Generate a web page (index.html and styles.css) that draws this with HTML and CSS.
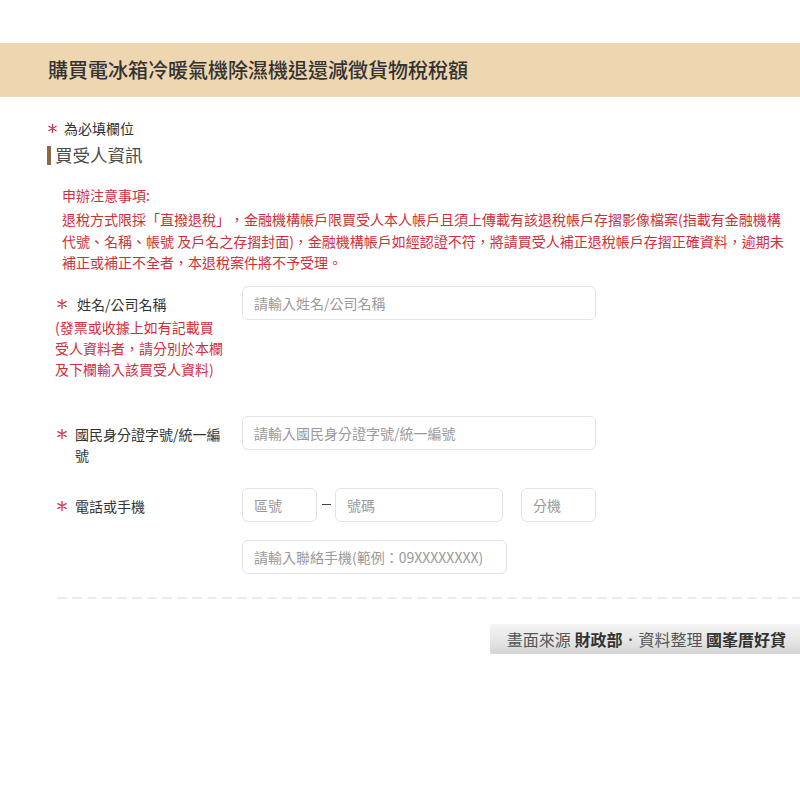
FILE: index.html
```html
<!DOCTYPE html>
<html lang="zh-Hant">
<head>
<meta charset="utf-8">
<title>購買電冰箱冷暖氣機除濕機退還減徵貨物稅稅額</title>
<link rel="stylesheet" href="styles.css">
</head>
<body>
<header class="topbar">
  <h1 class="topbar-title">購買電冰箱冷暖氣機除濕機退還減徵貨物稅稅額</h1>
</header>

<main class="content">
  <p class="required">
    <span class="star star-small"><svg viewBox="0 0 10 10" width="9" height="9"><path d="M5 0.3V9.7M0.9 2.6L9.1 7.4M0.9 7.4L9.1 2.6" stroke="#d2344c" stroke-width="1.3" fill="none" stroke-linecap="round"/></svg></span>
    <span>為必填欄位</span>
  </p>

  <h2 class="section-title">買受人資訊</h2>

  <div class="notice">
    <p class="notice-title">申辦注意事項:</p>
    <p class="notice-text">退稅方式限採「直撥退稅」，金融機構帳戶限買受人本人帳戶且須上傳載有該退稅帳戶存摺影像檔案(指載有金融機構<br>代號、名稱、帳號 及戶名之存摺封面)，金融機構帳戶如經認證不符，將請買受人補正退稅帳戶存摺正確資料，逾期未<br>補正或補正不全者，本退稅案件將不予受理。</p>
  </div>

  <form class="form">
    <div class="row row-name">
      <div class="label">
        <div class="label-main label-main-wide">
          <span class="star"><svg viewBox="0 0 10 10" width="10" height="10"><path d="M5 0.3V9.7M0.9 2.6L9.1 7.4M0.9 7.4L9.1 2.6" stroke="#d2344c" stroke-width="1.3" fill="none" stroke-linecap="round"/></svg></span>
          <span class="label-text">姓名/公司名稱</span>
        </div>
        <p class="label-note">(發票或收據上如有記載買受人資料者，請分別於本欄及下欄輸入該買受人資料)</p>
      </div>
      <div class="field">
        <input class="input" type="text" placeholder="請輸入姓名/公司名稱">
      </div>
    </div>

    <div class="row row-id">
      <div class="label">
        <div class="label-main">
          <span class="star"><svg viewBox="0 0 10 10" width="10" height="10"><path d="M5 0.3V9.7M0.9 2.6L9.1 7.4M0.9 7.4L9.1 2.6" stroke="#d2344c" stroke-width="1.3" fill="none" stroke-linecap="round"/></svg></span>
          <span class="label-text">國民身分證字號/統一編號</span>
        </div>
      </div>
      <div class="field">
        <input class="input" type="text" placeholder="請輸入國民身分證字號/統一編號">
      </div>
    </div>

    <div class="row row-phone">
      <div class="label">
        <div class="label-main">
          <span class="star"><svg viewBox="0 0 10 10" width="10" height="10"><path d="M5 0.3V9.7M0.9 2.6L9.1 7.4M0.9 7.4L9.1 2.6" stroke="#d2344c" stroke-width="1.3" fill="none" stroke-linecap="round"/></svg></span>
          <span class="label-text">電話或手機</span>
        </div>
      </div>
      <div class="field">
        <div class="phone-line">
          <input class="input input-area" type="text" placeholder="區號">
          <span class="phone-dash"></span>
          <input class="input input-number" type="text" placeholder="號碼">
          <input class="input input-ext" type="text" placeholder="分機">
        </div>
        <input class="input input-mobile" type="text" placeholder="請輸入聯絡手機(範例：09XXXXXXXX)">
      </div>
    </div>
  </form>

  <div class="divider"></div>
</main>

<footer class="credit">
  <div class="credit-badge">畫面來源&nbsp;<b>財政部</b>．資料整理&nbsp;<b>國峯厝好貸</b></div>
</footer>
</body>
</html>
```

FILE: styles.css
```css
body {
  margin: 0;
  background: #ffffff;
  color: #333333;
  font-family: "Noto Sans CJK TC", "Noto Sans", "Liberation Sans", sans-serif;
  text-spacing-trim: space-all;
}

.topbar {
  margin-top: 43px;
  height: 54px;
  background: #eed6b1;
  display: flex;
  align-items: center;
  padding-left: 48px;
}

.topbar-title {
  margin: 0;
  font-size: 20px;
  font-weight: 500;
  color: #333333;
  line-height: 1;
}

.content {
  padding-left: 48px;
}

.required {
  margin: 21px 0 0;
  font-size: 14px;
  line-height: 20px;
  display: flex;
  align-items: center;
  gap: 7px;
  color: #333333;
}

.star {
  flex: none;
  width: 10px;
  height: 21px;
  display: flex;
  align-items: center;
  justify-content: center;
}

.star-small {
  width: 9px;
  height: 20px;
}

.section-title {
  margin: 6px 0 0 -1px;
  font-size: 17.5px;
  line-height: 22px;
  font-weight: 400;
  color: #4a4a4a;
  display: flex;
  align-items: center;
  gap: 4px;
}

.section-title::before {
  content: "";
  width: 4px;
  height: 19px;
  background: #8b6a48;
}

.notice {
  margin: 18px 0 0 14px;
  color: #cf2f3b;
  font-size: 14px;
}

.notice-title {
  margin: 0;
  line-height: 22px;
}

.notice-text {
  margin: 3px 0 0;
  line-height: 21.5px;
  width: 740px;
}

.form {
  margin: 12px 0 0 7px;
}

.row {
  display: grid;
  grid-template-columns: 187px 354px;
}

.row-name {
  margin-bottom: 36px;
}

.row-id {
  margin-bottom: 22px;
}

.label {
  padding-top: 8px;
  font-size: 14px;
  line-height: 21px;
  color: #333333;
}

.label-main {
  display: flex;
  align-items: flex-start;
  gap: 8px;
  padding-left: 2px;
}

.label-main-wide {
  gap: 10px;
}

.label-text {
  width: 152px;
}

.label-note {
  margin: 2px 0 0;
  width: 170px;
  font-size: 14px;
  line-height: 21px;
  color: #cf2f3b;
}

.field {
  display: flex;
  flex-direction: column;
}

.input {
  box-sizing: border-box;
  width: 100%;
  height: 34px;
  margin: 0;
  padding: 0 11px;
  border: 1px solid #e3e3e3;
  border-radius: 6px;
  background: #ffffff;
  color: #333333;
  font-family: "Noto Sans CJK TC", "Noto Sans", sans-serif;
  font-size: 14px;
  outline: none;
}

.input::placeholder {
  color: #9a9a9a;
}

.phone-line {
  display: flex;
  align-items: center;
}

.input-area,
.input-ext {
  width: 75px;
  flex: none;
}

.input-number {
  width: 168px;
  flex: none;
  margin-right: 18px;
}

.phone-dash {
  width: 18px;
  height: 34px;
  flex: none;
  display: flex;
  align-items: center;
  justify-content: center;
}

.phone-dash::before {
  content: "";
  width: 9px;
  height: 1.5px;
  background: #444444;
}

.input-mobile {
  width: 265px;
  margin-top: 18px;
}

.divider {
  margin: 23px 0 0 9px;
  height: 2px;
  background: repeating-linear-gradient(90deg, #ececec 0 10px, transparent 10px 15px);
}

.credit {
  margin-top: 25px;
  display: flex;
  justify-content: flex-end;
}

.credit-badge {
  width: 310px;
  height: 30px;
  box-sizing: border-box;
  display: flex;
  align-items: center;
  justify-content: flex-end;
  padding-right: 14px;
  background: linear-gradient(180deg, #f4f4f4 0%, #e6e6e6 55%, #d5d5d5 100%);
  border-radius: 2px 0 0 2px;
  font-size: 16px;
  color: #555555;
  white-space: nowrap;
}

.credit-badge b {
  font-weight: 700;
  color: #333333;
}
```
